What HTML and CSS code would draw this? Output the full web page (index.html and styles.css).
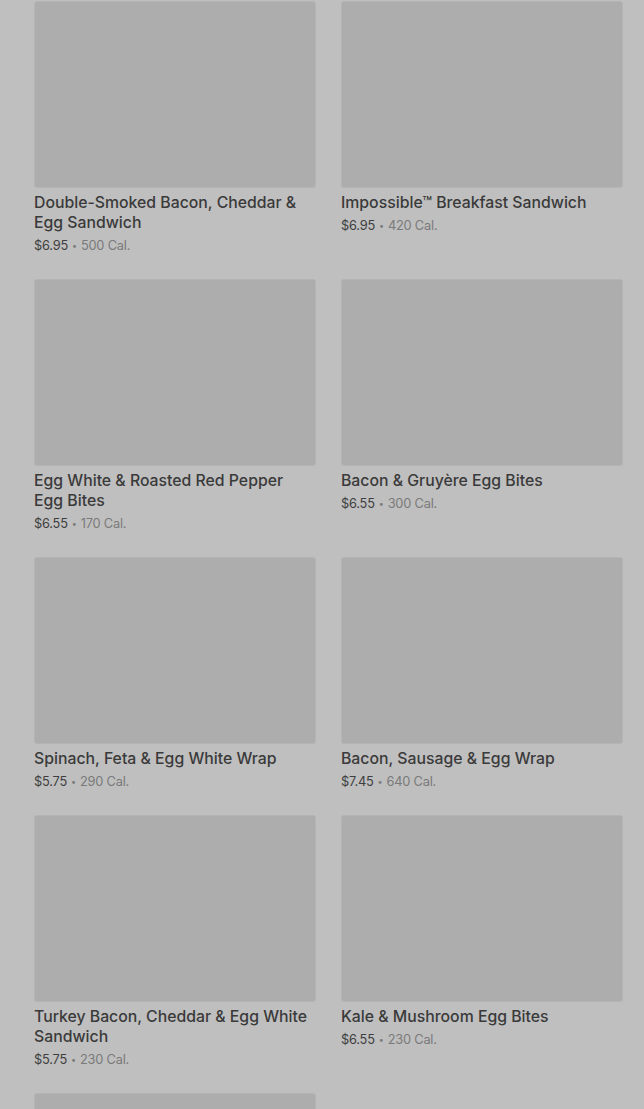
FILE: index.html
```html
<!DOCTYPE html>
<html lang="en">
<head>
<meta charset="utf-8">
<link rel="stylesheet" href="styles.css">
<title>Menu</title>
</head>
<body>
<main class="grid">
  <article class="card"><div class="img"></div><h3 class="title">Double-Smoked Bacon, Cheddar &amp; Egg Sandwich</h3><p class="meta"><span class="price">$6.95</span><span class="dot">•</span><span class="cal">500 Cal.</span></p></article>
  <article class="card"><div class="img"></div><h3 class="title">Impossible™ Breakfast Sandwich</h3><p class="meta"><span class="price">$6.95</span><span class="dot">•</span><span class="cal">420 Cal.</span></p></article>
  <article class="card"><div class="img"></div><h3 class="title">Egg White &amp; Roasted Red Pepper Egg Bites</h3><p class="meta"><span class="price">$6.55</span><span class="dot">•</span><span class="cal">170 Cal.</span></p></article>
  <article class="card"><div class="img"></div><h3 class="title">Bacon &amp; Gruyère Egg Bites</h3><p class="meta"><span class="price">$6.55</span><span class="dot">•</span><span class="cal">300 Cal.</span></p></article>
  <article class="card"><div class="img"></div><h3 class="title">Spinach, Feta &amp; Egg White Wrap</h3><p class="meta"><span class="price">$5.75</span><span class="dot">•</span><span class="cal">290 Cal.</span></p></article>
  <article class="card"><div class="img"></div><h3 class="title">Bacon, Sausage &amp; Egg Wrap</h3><p class="meta"><span class="price">$7.45</span><span class="dot">•</span><span class="cal">640 Cal.</span></p></article>
  <article class="card"><div class="img"></div><h3 class="title">Turkey Bacon, Cheddar &amp; Egg White Sandwich</h3><p class="meta"><span class="price">$5.75</span><span class="dot">•</span><span class="cal">230 Cal.</span></p></article>
  <article class="card"><div class="img"></div><h3 class="title">Kale &amp; Mushroom Egg Bites</h3><p class="meta"><span class="price">$6.55</span><span class="dot">•</span><span class="cal">230 Cal.</span></p></article>
  <article class="card"><div class="img"></div></article>
</main>
</body>
</html>
```
FILE: styles.css
```css
html, body {
  margin: 0;
  padding: 0;
  background: #bfbfbf;
}
body {
  font-family: "Inter", "Liberation Sans", sans-serif;
  overflow: hidden;
  height: 1109px;
}
.grid {
  display: grid;
  grid-template-columns: 282px 282px;
  column-gap: 25px;
  padding: 1px 0 0 34px;
  align-items: start;
}
.card {
  display: flex;
  flex-direction: column;
  padding-bottom: 23px;
}
.img {
  flex: none;
  height: 185px;
  background: #adadad;
  border: 1px solid #b4b4b4;
  border-radius: 3px;
}
.title {
  margin: 5px 0 3px;
  padding-right: 4px;
  font-size: 15.8px;
  line-height: 20px;
  font-weight: 500;
  color: #3a3a3a;
}
.meta {
  margin: 0;
  height: 20px;
  display: flex;
  align-items: center;
  gap: 4px;
  font-size: 12.8px;
  line-height: 20px;
  color: #3e3e3e;
  letter-spacing: -0.2px;
}
.dot {
  color: #7a7a7a;
  font-size: 9px;
  line-height: 20px;
}
.cal {
  color: #7a7a7a;
}
```
